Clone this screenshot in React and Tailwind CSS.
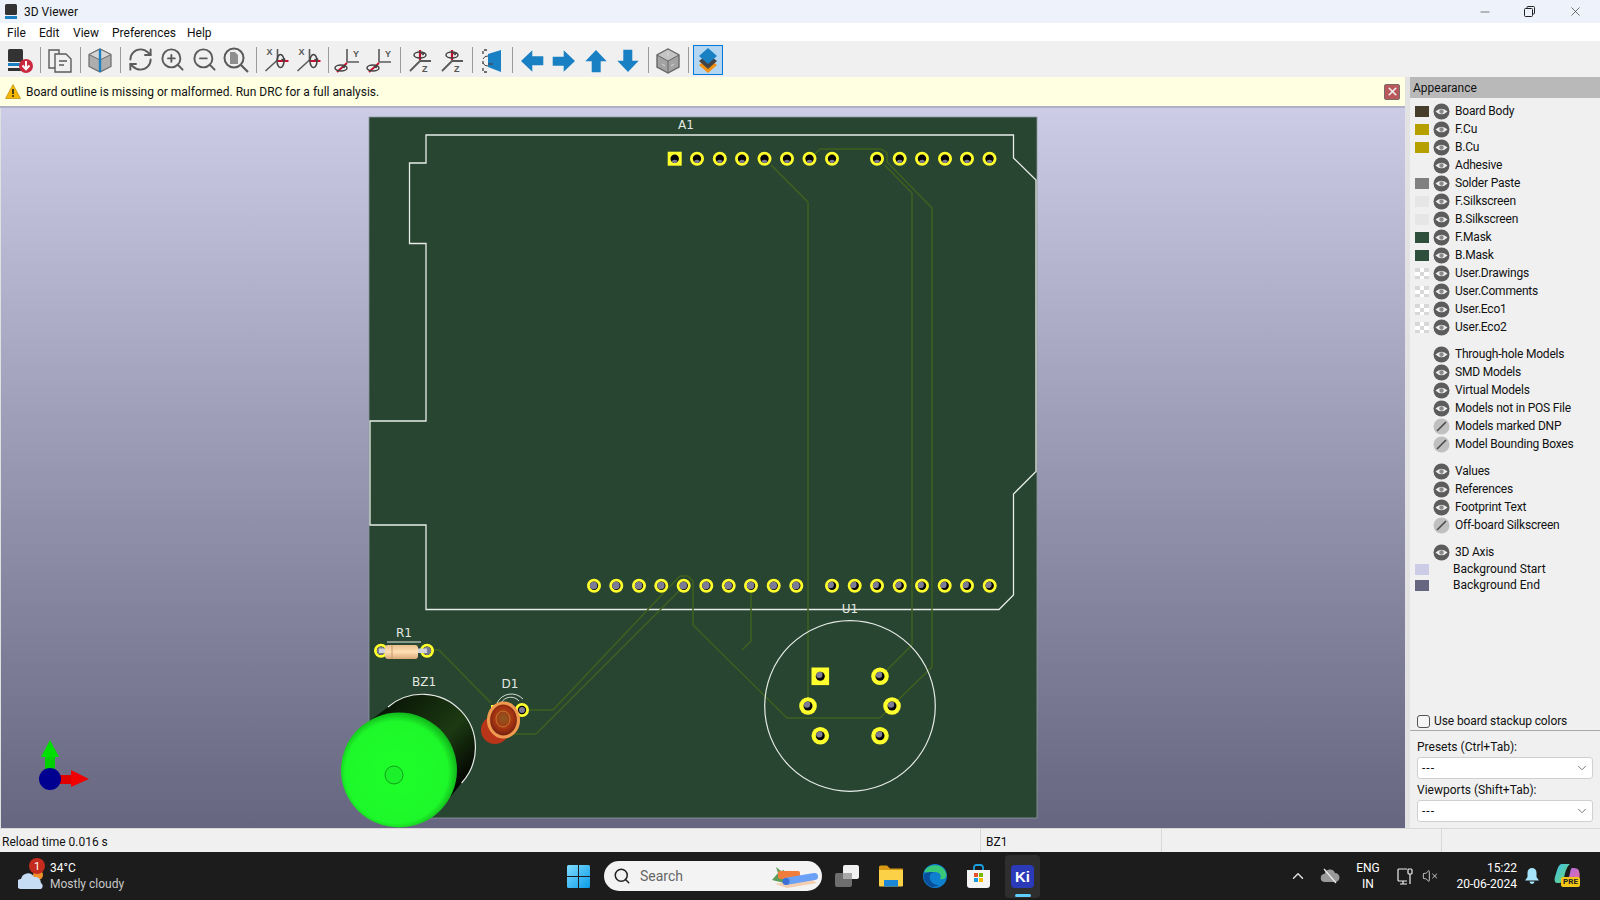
import { ChevronDown, Minus, X, RefreshCw, ZoomIn, ZoomOut, Search, ChevronUp, VolumeX } from "lucide-react";

const GRAY = "#5a5a5a";
const BLUE = "#1a80c4";
const RED = "#c8102e";

function Icon({ children }) {
  return (
    <svg width="32" height="32" viewBox="0 0 32 32" className="block shrink-0">
      {children}
    </svg>
  );
}

function SaveBoardIcon() {
  return (
    <Icon>
      <rect x="4" y="5" width="15" height="13" rx="1.5" fill="#333" />
      <rect x="4" y="19" width="15" height="3" fill={BLUE} />
      <rect x="4" y="24" width="13" height="3" fill="#333" />
      <circle cx="22" cy="22" r="7" fill="#c9283e" />
      <path d="M22 17v8M18.5 21.5l3.5 3.7 3.5-3.7" stroke="#fff" strokeWidth="2" fill="none" />
    </Icon>
  );
}

function CopyIcon() {
  return (
    <Icon>
      <path d="M11 24H5V6h10v4" fill="none" stroke={GRAY} strokeWidth="1.4" />
      <path d="M11 10h11l5 5v13H11z" fill="#f0f0f0" stroke={GRAY} strokeWidth="1.4" />
      <path d="M15 17h8M15 21h5" stroke={GRAY} strokeWidth="1.4" />
    </Icon>
  );
}

function BoxIcon() {
  return (
    <Icon>
      <path d="M16 5l11 5.5v12L16 28 5 22.500v-12z" fill="#aeaeae" stroke="#6a6a6a" strokeWidth="1.2" />
      <path d="M5 10.500L16 16l11-5.500L16 5z" fill="#d6d6d6" stroke="#6a6a6a" strokeWidth="1" />
      <path d="M16 5v23" stroke={BLUE} strokeWidth="2.4" />
    </Icon>
  );
}

function ZoomFitIcon() {
  return (
    <Icon>
      <circle cx="14" cy="14" r="9.500" fill="none" stroke={GRAY} strokeWidth="2" />
      <path d="M21 21l7 7" stroke={GRAY} strokeWidth="2.200" />
      <path d="M10 8h5l3 3v9h-8z" fill="#8f8f8f" />
    </Icon>
  );
}

function Rotate({ cx, cy, flip }) {
  return (
    <g fill="none" stroke="#444" strokeWidth="1.500">
      <ellipse cx={cx} cy={cy} rx={flip ? 6 : 3.500} ry={flip ? 3 : 6.500} />
      <path d={`M${cx + 1} ${cy - 2}l2 1.500 1.500 -2`} />
    </g>
  );
}

function AxisX({ mirror }) {
  return (
    <Icon>
      <g transform="translate(1.500 0)">
        <text x="5" y="11" fontSize="9" fontWeight="700" fill="#555" fontFamily="'Liberation Sans',sans-serif">X</text>
        <path d="M4 27l12-11V5" fill="none" stroke={GRAY} strokeWidth="1.600" />
        <path d="M16 17h11" stroke={RED} strokeWidth="2" />
        <Rotate cx={mirror ? 20 : 19} cy={17} />
      </g>
    </Icon>
  );
}

function AxisY() {
  return (
    <Icon>
      <g transform="translate(2 0)">
        <text x="19" y="13" fontSize="9" fontWeight="700" fill="#555" fontFamily="'Liberation Sans',sans-serif">Y</text>
        <path d="M13 5v13h12" fill="none" stroke={GRAY} strokeWidth="1.600" />
        <path d="M3 28l10-9" stroke={RED} strokeWidth="2" />
        <Rotate cx={7} cy={24} flip />
      </g>
    </Icon>
  );
}

function AxisZ() {
  return (
    <Icon>
      <path d="M16 6v10" stroke={RED} strokeWidth="2.200" />
      <path d="M27 17H16L6 27" fill="none" stroke={GRAY} strokeWidth="1.800" />
      <text x="18" y="28" fontSize="9" fontWeight="700" fill="#555" fontFamily="'Liberation Sans',sans-serif">Z</text>
      <Rotate cx={16} cy={11} flip />
    </Icon>
  );
}

function FlipIcon() {
  return (
    <Icon>
      <path d="M11 6H7v5M7 17v5M7 24v4h4" fill="none" stroke="#444" strokeWidth="1.300" strokeDasharray="3 2" />
      <path d="M7 15a5 5 0 0 1 5-3M7 19a5 5 0 0 0 5 3" fill="none" stroke="#444" strokeWidth="1" />
      <path d="M12 10l13-4v22l-13-5z" fill={BLUE} />
      <path d="M12 20h5" stroke="#444" strokeWidth="1.200" />
    </Icon>
  );
}

function Arrow({ rotate }) {
  return (
    <Icon>
      <path
        d="M5 17L16.300 6.300v6h11v9h-11v6.400z"
        fill={BLUE}
        transform={`rotate(${rotate} 16 17)`}
      />
    </Icon>
  );
}

function CubeIcon() {
  return (
    <Icon>
      <path d="M16 5l11 6v12l-11 6-11-6V11z" fill="#a2a2a2" stroke="#666" strokeWidth="1.400" />
      <path d="M5 11l11 6 11-6-11-6z" fill="#c4c4c4" stroke="#666" strokeWidth="1" />
      <path d="M16 17v12" stroke="#666" strokeWidth="1" />
      <path d="M16 8v4M10 20l3 2M22 20l-3 2" stroke="#d8d8d8" strokeWidth="1" />
    </Icon>
  );
}

function LayersIcon() {
  return (
    <Icon>
      <path d="M16 14l9 7-9 8-9-8z" fill="#f29111" />
      <path d="M16 10l9 7-9 8-9-8z" fill="#444" />
      <path d="M16 4l9 8-9 8-9-8z" fill={BLUE} />
    </Icon>
  );
}

function Sep() {
  return (
    <div className="w-[8px] h-[26px] flex justify-center shrink-0">
      <div className="w-px h-full bg-[#9a9a9a]" />
    </div>
  );
}

function Btn({ children }) {
  return <div className="w-[32px] h-[32px] flex items-center justify-center shrink-0">{children}</div>;
}

function Toolbar() {
  const lucideProps = { size: 27, color: GRAY, strokeWidth: 1.700 };
  return (
    <div className="h-[36px] bg-[#f0f0f0] flex items-center pl-[4px] pt-[1px]">
      <Btn><SaveBoardIcon /></Btn>
      <Sep />
      <Btn><CopyIcon /></Btn>
      <Sep />
      <Btn><BoxIcon /></Btn>
      <Sep />
      <Btn><RefreshCw {...lucideProps} /></Btn>
      <Btn><ZoomIn {...lucideProps} /></Btn>
      <Btn><ZoomOut {...lucideProps} /></Btn>
      <Btn><ZoomFitIcon /></Btn>
      <Sep />
      <Btn><AxisX /></Btn>
      <Btn><AxisX mirror /></Btn>
      <Sep />
      <Btn><AxisY /></Btn>
      <Btn><AxisY /></Btn>
      <Sep />
      <Btn><AxisZ /></Btn>
      <Btn><AxisZ /></Btn>
      <Sep />
      <Btn><FlipIcon /></Btn>
      <Sep />
      <Btn><Arrow rotate={0} /></Btn>
      <Btn><Arrow rotate={180} /></Btn>
      <Btn><Arrow rotate={90} /></Btn>
      <Btn><Arrow rotate={270} /></Btn>
      <Sep />
      <Btn><CubeIcon /></Btn>
      <Sep />
      <div className="w-[30px] h-[30px] ml-[1px] flex items-center justify-center shrink-0 bg-[#b3d7f3] border border-[#0078d4]">
        <LayersIcon />
      </div>
    </div>
  );
}

const topPads = [697, 719.8, 742, 764.5, 787, 809.5, 832, 877, 899.7, 922, 945, 967, 989.5];
const bottomLeftPads = [594, 616.3, 639, 661.3, 683.7, 706.3, 728.7, 751, 773.7, 796.3];
const bottomRightPads = [832, 854.7, 877, 899.7, 922, 944.7, 967, 989.7];

function Hole({ id, x, y, r, dx, dy, gr }) {
  return (
    <g>
      <clipPath id={id}>
        <circle cx={x} cy={y} r={r} />
      </clipPath>
      <circle cx={x} cy={y} r={r} fill="#050505" />
      <circle cx={x + dx} cy={y + dy} r={gr} fill="#7b7b97" clipPath={`url(#${id})`} />
    </g>
  );
}

function Pad({ id, x, y, square, big, dx, dy, gr }) {
  const outer = big ? 8.800 : 7;
  const hole = big ? 4.500 : 4.200;
  return (
    <g>
      {square ? (
        <rect x={x - outer} y={y - outer} width={outer * 2} height={outer * 2} fill="#ffff2e" />
      ) : (
        <circle cx={x} cy={y} r={outer} fill="#ffff2e" />
      )}
      <Hole id={id} x={x} y={y} r={hole} dx={dx} dy={dy} gr={gr} />
    </g>
  );
}

const traces = [
  "M771 165L808 202V698",
  "M815 154L820 149H881L887 153V162L932 208V667L898 700",
  "M884.600 165L912 193V645L885 672",
  "M553 710L673 583L680 576H688L693 581V625L787 718H880L893 705",
  "M536 734L680 590",
  "M751 593V641L742 650",
  "M432 650H439L491 703",
  "M528 710H553",
  "M510 734H536",
];

function Scene() {
  return (
    <svg width="1404" height="720" viewBox="1 108 1404 720" className="block">
      <defs>
        <linearGradient id="bodyGrad" x1="0" y1="0" x2="1" y2="1">
          <stop offset="0" stopColor="#020802" />
          <stop offset="0.550" stopColor="#1c3a12" />
          <stop offset="0.850" stopColor="#000" />
        </linearGradient>
        <radialGradient id="capGrad" cx="0.480" cy="0.520" r="0.520">
          <stop offset="0" stopColor="#1eff2a" />
          <stop offset="0.850" stopColor="#1ef82a" />
          <stop offset="1" stopColor="#12b81c" />
        </radialGradient>
        <radialGradient id="ledGrad" cx="0.500" cy="0.450" r="0.600">
          <stop offset="0" stopColor="#8a5a20" />
          <stop offset="0.500" stopColor="#a83412" />
          <stop offset="1" stopColor="#5a1a0c" />
        </radialGradient>
        <linearGradient id="resGrad" x1="0" y1="0" x2="0" y2="1">
          <stop offset="0" stopColor="#e8c090" />
          <stop offset="0.500" stopColor="#ffe0b4" />
          <stop offset="1" stopColor="#d8a878" />
        </linearGradient>
      </defs>

      {/* board */}
      <rect x="369" y="117" width="668" height="701" fill="#274530" stroke="#8d98a0" strokeWidth="0.800" />
      <path
        d="M426 135H1013.500V158L1036 180V471.500L1013.500 494V595L999 609.500H426V525H370V421H426V243.500H409.500V163H426Z"
        fill="none"
        stroke="#e8ece8"
        strokeWidth="1.300"
      />
      <g fill="none" stroke="#40601f" strokeWidth="1.500">
        {traces.map((d) => (
          <path key={d} d={d} />
        ))}
      </g>

      {/* pads */}
      <Pad id="t0" x={674.700} y={158.700} square dx={0} dy={4} gr={3} />
      {topPads.map((x, i) => (
        <Pad key={x} id={`t${i + 1}`} x={x} y={158.700} dx={0} dy={4} gr={3} />
      ))}
      {bottomLeftPads.map((x, i) => (
        <Pad key={x} id={`bl${i}`} x={x} y={585.700} dx={-0.500} dy={-0.300} gr={3.800} />
      ))}
      {bottomRightPads.map((x, i) => (
        <Pad key={x} id={`br${i}`} x={x} y={585.700} dx={-1.500} dy={-1} gr={3.400} />
      ))}
      <Pad id="u0" x={820.300} y={676.300} square big dx={-1} dy={-1.500} gr={3.200} />
      <Pad id="u1" x={880} y={676.300} big dx={-1} dy={-1.500} gr={3.200} />
      <Pad id="u2" x={808} y={706} big dx={-1} dy={-1.500} gr={3.200} />
      <Pad id="u3" x={892} y={706} big dx={-1} dy={-1.500} gr={3.200} />
      <Pad id="u4" x={820.300} y={735.700} big dx={-1} dy={-1.500} gr={3.200} />
      <Pad id="u5" x={880} y={735.700} big dx={-1} dy={-1.500} gr={3.200} />

      {/* silkscreen */}
      <circle cx="850" cy="706" r="85.300" fill="none" stroke="#e8ece8" strokeWidth="1.200" />
      <g fill="#e4e8e4" fontFamily="'DejaVu Sans',sans-serif" fontSize="12" textAnchor="middle">
        <text x="686" y="129">A1</text>
        <text x="850" y="613">U1</text>
        <text x="404" y="637">R1</text>
        <text x="424" y="686">BZ1</text>
        <text x="510" y="688">D1</text>
      </g>

      {/* R1 */}
      <path d="M387 642H421" stroke="#e8ece8" strokeWidth="1" />
      <Pad id="r0" x={381} y={650.700} dx={0} dy={0} gr={4.200} />
      <Pad id="r1" x={427} y={650.700} dx={0} dy={0} gr={4.200} />
      <rect x="379" y="648.500" width="48" height="4.500" fill="#d0d4d8" />
      <rect x="385" y="645" width="33" height="14" rx="3" fill="url(#resGrad)" />
      <path d="M392 645v14" stroke="#c89868" strokeWidth="1" />

      {/* D1 */}
      <path d="M497 703a16 16 0 0 1 26 -4M501 703a11 11 0 0 1 18 -2" fill="none" stroke="#e8ece8" strokeWidth="0.900" />
      <rect x="491" y="705" width="12" height="10" fill="#ffff2e" />
      <Pad id="d1" x={522} y={710} dx={0} dy={0} gr={3} />
      <circle cx="495" cy="730" r="14" fill="#b8351a" />
      <ellipse cx="503.500" cy="720" rx="15" ry="17" fill="url(#ledGrad)" stroke="#f09a50" strokeWidth="3.200" />
      <ellipse cx="503" cy="719" rx="7" ry="8" fill="none" stroke="#c8762c" strokeWidth="1" />

      {/* BZ1 */}
      <path
        d="M359 729L388 707A53 53 0 0 1 461.600 783L438.700 811.400Z"
        fill="url(#bodyGrad)"
      />
      <path d="M388 707A53 53 0 0 1 461.600 783" fill="none" stroke="#e8ece8" strokeWidth="1.200" />
      <ellipse cx="399" cy="770" rx="58" ry="57.500" fill="url(#capGrad)" />
      <circle cx="394" cy="775" r="9" fill="#1cf02a" stroke="#0c8a14" strokeWidth="0.800" />

      {/* axis */}
      <rect x="45" y="755" width="10" height="16" fill="#00d000" />
      <path d="M50 740L59 757H41Z" fill="#00e000" />
      <rect x="58" y="775" width="15" height="9" fill="#e00000" />
      <path d="M71 770L89 779L71 787Z" fill="#f00000" />
      <circle cx="50" cy="779" r="11" fill="#000090" />
    </svg>
  );
}

function Eye() {
  return (
    <svg width="17" height="17" viewBox="0 0 17 17" className="block shrink-0">
      <circle cx="8.500" cy="8.500" r="8" fill="#5c5c5c" />
      <path d="M2.500 8.500Q8.500 2.800 14.500 8.500Q8.500 14.200 2.500 8.500Z" fill="#f0f0f0" />
      <circle cx="8.500" cy="8.500" r="2.200" fill="#8a8a8a" />
    </svg>
  );
}

function EyeOff() {
  return (
    <svg width="17" height="17" viewBox="0 0 17 17" className="block shrink-0">
      <circle cx="8.500" cy="8.500" r="8" fill="#c0c0c0" />
      <path d="M4 13L13 4" stroke="#4a4a4a" strokeWidth="1.600" />
    </svg>
  );
}

function Checker() {
  return (
    <svg width="14" height="11" viewBox="0 0 14 11" className="block">
      <rect width="14" height="11" fill="#fff" />
      <path d="M0 0h5v4H0zM9 0h5v4H9zM5 4h4v4H5zM0 8h5v3H0zM9 8h5v3H9z" fill="#d8d8d8" />
    </svg>
  );
}

const layerRows = [
  ["Board Body", "bg-[#463e2b]"],
  ["F.Cu", "bg-[#b5a000]"],
  ["B.Cu", "bg-[#b5a000]"],
  ["Adhesive", ""],
  ["Solder Paste", "bg-[#808080]"],
  ["F.Silkscreen", "bg-[#e6e6e6]"],
  ["B.Silkscreen", "bg-[#e6e6e6]"],
  ["F.Mask", "bg-[#2d4f3c]"],
  ["B.Mask", "bg-[#2d4f3c]"],
  ["User.Drawings", "checker"],
  ["User.Comments", "checker"],
  ["User.Eco1", "checker"],
  ["User.Eco2", "checker"],
];

const modelRows = [
  ["Through-hole Models", true],
  ["SMD Models", true],
  ["Virtual Models", true],
  ["Models not in POS File", true],
  ["Models marked DNP", false],
  ["Model Bounding Boxes", false],
];

const textRows = [
  ["Values", true],
  ["References", true],
  ["Footprint Text", true],
  ["Off-board Silkscreen", false],
];

function Row({ label, swatch, on = true }) {
  return (
    <div className="h-[18px] flex items-center">
      <div className="w-[14px] h-[11px] ml-[5px] shrink-0">
        {swatch === "checker" ? <Checker /> : <div className={`w-full h-full ${swatch || ""}`} />}
      </div>
      <div className="ml-[4px]">{on ? <Eye /> : <EyeOff />}</div>
      <span className="ml-[5px] text-[#111] tracking-[-0.2px]">{label}</span>
    </div>
  );
}

function Dropdown() {
  return (
    <div className="mx-[7px] h-[22px] bg-white border border-[#d0d0d0] rounded-[3px] flex items-center justify-between pl-[4px] pr-[3px]">
      <span className="tracking-[1px]">---</span>
      <ChevronDown size={14} color="#666" strokeWidth={1.500} />
    </div>
  );
}

function Sidebar() {
  return (
    <div className="flex-1 bg-[#f0f0f0] flex flex-col text-[12px] leading-none">
      <div className="h-[21px] bg-[#b9b9b9] flex items-center pl-[3px] text-[#111]">Appearance</div>
      <div className="mt-[4px]">
        {layerRows.map(([label, swatch]) => (
          <Row key={label} label={label} swatch={swatch} />
        ))}
      </div>
      <div className="mt-[9px]">
        {modelRows.map(([label, on]) => (
          <Row key={label} label={label} on={on} />
        ))}
      </div>
      <div className="mt-[9px]">
        {textRows.map(([label, on]) => (
          <Row key={label} label={label} on={on} />
        ))}
      </div>
      <div className="mt-[9px]">
        <Row label="3D Axis" />
      </div>
      <div className="h-[16px] flex items-center">
        <div className="w-[14px] h-[11px] ml-[5px] bg-[#ccccE6]" />
        <span className="ml-[24px] text-[#111]">Background Start</span>
      </div>
      <div className="h-[16px] flex items-center">
        <div className="w-[14px] h-[11px] ml-[5px] bg-[#666680]" />
        <span className="ml-[24px] text-[#111]">Background End</span>
      </div>

      <div className="flex-1" />

      <div className="h-[16px] flex items-center pl-[7px]">
        <div className="w-[13px] h-[13px] bg-[#f5f5f5] border border-[#555] rounded-[3px]" />
        <span className="ml-[4px] text-[#111] tracking-[-0.1px]">Use board stackup colors</span>
      </div>
      <div className="h-px bg-[#a8a8a8] mt-[1px]" />
      <div className="h-[26px] flex items-center pl-[7px] pt-[6px] text-[#111]">Presets (Ctrl+Tab):</div>
      <Dropdown />
      <div className="h-[21px] flex items-center pl-[7px] text-[#111]">Viewports (Shift+Tab):</div>
      <Dropdown />
      <div className="h-[6px]" />
    </div>
  );
}

function WeatherIcon() {
  return (
    <div className="relative w-[28px] h-[30px]">
      <svg width="28" height="30" viewBox="0 0 28 30" className="block">
        <circle cx="20" cy="14" r="5" fill="#f0902a" />
        <path d="M3 28a5 5 0 0 1 0-10 7 7 0 0 1 13-2 6 6 0 0 1 7 6 3.500 3.500 0 0 1 0 6z" fill="#c6dcf4" />
      </svg>
      <div className="absolute left-[11px] top-[-3px] w-[16px] h-[16px] rounded-full bg-[#c42b1c] text-white text-[11px] flex items-center justify-center">
        1
      </div>
    </div>
  );
}

function WindowsLogo() {
  return (
    <svg width="23" height="23" viewBox="0 0 23 23" className="block shrink-0">
      <defs>
        <linearGradient id="winGrad" x1="0" y1="0" x2="1" y2="1">
          <stop offset="0" stopColor="#7fdcff" />
          <stop offset="1" stopColor="#0a9be8" />
        </linearGradient>
      </defs>
      <path d="M0 1.500A1.500 1.500 0 0 1 1.500 0H11v11H0zM12 0h9.500A1.500 1.500 0 0 1 23 1.500V11H12zM0 12h11v11H1.500A1.500 1.500 0 0 1 0 21.500zM12 12h11v9.500a1.500 1.500 0 0 1-1.500 1.500H12z" fill="url(#winGrad)" />
    </svg>
  );
}

function SearchArt() {
  return (
    <svg width="48" height="24" viewBox="0 0 48 24" className="block">
      <path d="M2 16L8 9l-2-6 5 4 3-1v13z" fill="#5b9e5a" />
      <rect x="8" y="7" width="22" height="8" rx="2" fill="#f07d3c" />
      <path d="M5 20l34-6 8 5-30 5z" fill="#f5cdb0" />
      <path d="M14 14l30-5a3.500 3.500 0 0 1 1 7l-29 5a4.500 4.500 0 0 1-2-7z" fill="#6aa0f5" />
      <circle cx="16" cy="17.500" r="3.500" fill="#3d6fd6" />
    </svg>
  );
}

function TaskViewIcon() {
  return (
    <svg width="24" height="22" viewBox="0 0 24 22" className="block shrink-0">
      <rect x="0" y="8" width="17" height="14" rx="2" fill="#6e6e6e" />
      <rect x="8" y="0" width="16" height="14" rx="2" fill="#f0f0f0" />
      <rect x="8" y="8" width="9" height="6" fill="#a8a8a8" />
    </svg>
  );
}

function FolderIcon() {
  return (
    <svg width="24" height="22" viewBox="0 0 24 22" className="block shrink-0">
      <path d="M0 2a1.500 1.500 0 0 1 1.500-1.500H8l3 3h12a1 1 0 0 1 1 1V8H0z" fill="#d89a14" />
      <path d="M0 5h24v15.500a1 1 0 0 1-1 1H1a1 1 0 0 1-1-1z" fill="#fbd247" />
      <path d="M5 15h14v6.500H5z" fill="#1b87d6" />
    </svg>
  );
}

function EdgeIcon() {
  return (
    <svg width="24" height="24" viewBox="0 0 24 24" className="block shrink-0">
      <circle cx="12" cy="12" r="12" fill="#0f7fd0" />
      <path d="M1 8a12 12 0 0 1 22 1c1.500 5-3 7-6 6 2-3 0-7-5-7-4 0-8 1-11 0z" fill="#38c878" />
      <path d="M12 8c-4 0-6 3-5 7 1 4 5 6 9 6-3 2-8 3-11 0C2 18 0 14 1 10c3-2 7-2 11-2z" fill="#0a4f9c" />
    </svg>
  );
}

function StoreIcon() {
  return (
    <svg width="23" height="24" viewBox="0 0 23 24" className="block shrink-0">
      <path d="M7 6V3.500A2.500 2.500 0 0 1 9.500 1h4A2.500 2.500 0 0 1 16 3.500V6" fill="none" stroke="#1aa0e0" strokeWidth="1.800" />
      <path d="M0 6h23v15a3 3 0 0 1-3 3H3a3 3 0 0 1-3-3z" fill="#f4f4f4" />
      <rect x="7" y="9" width="4" height="4" fill="#e8502a" />
      <rect x="12" y="9" width="4" height="4" fill="#7ab800" />
      <rect x="7" y="14" width="4" height="4" fill="#1a9be0" />
      <rect x="12" y="14" width="4" height="4" fill="#f5b800" />
    </svg>
  );
}

function CopilotIcon() {
  return (
    <div className="relative w-[28px] h-[28px] ml-[14px] shrink-0">
      <svg width="28" height="24" viewBox="0 0 28 24" className="block">
        <defs>
          <linearGradient id="copA" x1="0" y1="0" x2="1" y2="1">
            <stop offset="0" stopColor="#3fc4ef" />
            <stop offset="1" stopColor="#6fd36b" />
          </linearGradient>
          <linearGradient id="copB" x1="0" y1="0" x2="1" y2="1">
            <stop offset="0" stopColor="#a868e8" />
            <stop offset="1" stopColor="#f0709c" />
          </linearGradient>
        </defs>
        <path d="M8 2h8c-3 2-5 8-6 14-1 4-3 5-5 5H3C1 21 0 18 1 15 3 9 4 2 8 2z" fill="url(#copA)" />
        <path d="M18 6c3 0 6 0 7 3 1 3 1 7-1 10-1 2-3 2-5 2h-8c3-2 4-6 5-10 .5-3 1-5 2-5z" fill="url(#copB)" />
      </svg>
      <div className="absolute left-[7px] top-[15px] w-[19px] h-[10px] rounded-[2px] bg-[#f5c518] text-[#222] text-[8px] font-bold flex items-center justify-center leading-none">
        PRE
      </div>
    </div>
  );
}

function Taskbar() {
  return (
    <div className="h-[48px] bg-[#1c1c1c] flex items-center text-white">
      <div className="w-[567px] flex items-center pl-[18px] shrink-0">
        <WeatherIcon />
        <div className="ml-[4px] text-[12px] leading-[16px]">
          <div>34°C</div>
          <div className="text-[#c8c8c8]">Mostly cloudy</div>
        </div>
      </div>
      <WindowsLogo />
      <div className="ml-[14px] w-[218px] h-[30px] bg-[#f3f3f3] rounded-full flex items-center pl-[9px] pr-[4px] shrink-0">
        <Search size={18} color="#222" strokeWidth={2} />
        <span className="ml-[9px] text-[14px] text-[#666]">Search</span>
        <div className="ml-auto">
          <SearchArt />
        </div>
      </div>
      <div className="ml-[13px]"><TaskViewIcon /></div>
      <div className="ml-[20px]"><FolderIcon /></div>
      <div className="ml-[20px]"><EdgeIcon /></div>
      <div className="ml-[20px]"><StoreIcon /></div>
      <div className="relative ml-[15px] w-[35px] h-[43px] bg-[#2e2e2e] rounded-[4px] flex items-center justify-center shrink-0">
        <div className="w-[23px] h-[23px] bg-[#2b3ab8] rounded-[4px] text-white font-bold text-[15px] flex items-center justify-center leading-none font-['Liberation_Sans',sans-serif]">
          Ki
        </div>
        <div className="absolute bottom-[1px] left-[10px] w-[16px] h-[3px] rounded-full bg-[#60cdff]" />
      </div>

      <div className="ml-auto pr-[18px] flex items-center">
        <div className="w-[24px] flex justify-center"><ChevronUp size={18} color="#ddd" /></div>
        <div className="w-[24px] ml-[8px] flex justify-center">
          <svg width="20" height="16" viewBox="0 0 20 16" className="block">
            <path d="M5 14a4 4 0 0 1-.500-8 5.500 5.500 0 0 1 10.500-1 4.500 4.500 0 0 1 0 9z" fill="#9a9a9a" />
            <path d="M4 1l12 14" stroke="#eee" strokeWidth="1.200" />
          </svg>
        </div>
        <div className="w-[36px] ml-[8px] text-[12px] leading-[16px] text-center">
          <div>ENG</div>
          <div>IN</div>
        </div>
        <div className="w-[24px] ml-[7px] flex justify-center">
          <svg width="16" height="17" viewBox="0 0 16 17" fill="none" stroke="#eee" strokeWidth="1.200" className="block">
            <path d="M10 13H2a1 1 0 0 1-1-1V2a1 1 0 0 1 1-1h8" />
            <path d="M6 13v3M3 16h7" />
            <rect x="11" y="1" width="4" height="5" rx="1" />
            <path d="M13 6v10" />
          </svg>
        </div>
        <div className="w-[20px] ml-[3px] flex justify-center">
          <VolumeX size={16} color="#ddd" strokeWidth={1.300} />
        </div>
        <div className="w-[77px] text-[12px] leading-[16px] text-right">
          <div>15:22</div>
          <div>20-06-2024</div>
        </div>
        <div className="w-[16px] ml-[7px] flex justify-center">
          <svg width="14" height="16" viewBox="0 0 14 16" className="block">
            <path d="M7 0a4.500 4.500 0 0 1 4.500 4.500V9L14 12.500H0L2.500 9V4.500A4.500 4.500 0 0 1 7 0z" fill="#a6e4fb" />
            <path d="M4.500 13.500a2.500 2.500 0 0 0 5 0z" fill="#a6e4fb" />
          </svg>
        </div>
        <CopilotIcon />
      </div>
    </div>
  );
}

function App() {
  const menus = [
    ["File", "w-[32px]"],
    ["Edit", "w-[34px]"],
    ["View", "w-[39px]"],
    ["Preferences", "w-[75px]"],
    ["Help", "w-[40px]"],
  ];

  return (
    <div className="w-[1600px] h-[900px] flex flex-col overflow-hidden text-[12px] leading-none text-[#111] font-['Roboto',sans-serif]">
      {/* Title bar */}
      <div className="h-[23px] bg-[#eef2fa] flex items-center">
        <svg width="14" height="16" viewBox="0 0 14 16" className="block ml-[4px]">
          <rect x="1" y="0" width="12" height="11" rx="1.500" fill="#333" />
          <rect x="1" y="12" width="12" height="3" fill={BLUE} />
        </svg>
        <span className="ml-[6px] text-[12px]">3D Viewer</span>
        <div className="ml-auto flex items-center pr-[2px]">
          <div className="w-[45px] flex justify-center"><Minus size={14} color="#222" strokeWidth={1} /></div>
          <div className="w-[45px] flex justify-center">
            <svg width="11" height="11" viewBox="0 0 11 11" fill="none" stroke="#222" className="block">
              <rect x="0.500" y="2.500" width="8" height="8" rx="1" />
              <path d="M3 2.500V1.500a1 1 0 0 1 1-1h5.500a1 1 0 0 1 1 1V7a1 1 0 0 1-1 1h-1" />
            </svg>
          </div>
          <div className="w-[46px] flex justify-center"><X size={15} color="#222" strokeWidth={1} /></div>
        </div>
      </div>

      {/* Menu bar */}
      <div className="h-[18px] bg-white flex items-center pl-[7px] pt-[1px]">
        {menus.map(([label, width]) => (
          <span key={label} className={width}>{label}</span>
        ))}
      </div>

      <Toolbar />

      {/* Main area */}
      <div className="flex-1 flex min-h-0">
        <div className="w-[1405px] flex flex-col shrink-0">
          <div className="h-[31px] bg-[#ffffe1] border-b-2 border-[#b0b0c4] flex items-center pl-[5px]">
            <svg width="16" height="15" viewBox="0 0 16 15" className="block">
              <path d="M8 0.500L15.500 14.500H0.500Z" fill="#f5b800" stroke="#b08000" strokeWidth="0.600" />
              <path d="M8 5v5" stroke="#222" strokeWidth="1.600" />
              <circle cx="8" cy="12" r="1" fill="#222" />
            </svg>
            <span className="ml-[5px]">Board outline is missing or malformed. Run DRC for a full analysis.</span>
            <div className="ml-auto mr-[5px] w-[16px] h-[16px] bg-[#b8585a] border border-[#7a6a6a] rounded-[2px] flex items-center justify-center">
              <X size={13} color="#f0f0f0" strokeWidth={3} />
            </div>
          </div>
          <div className="flex-1 min-h-0 bg-gradient-to-b from-[#ccccE6] to-[#666680] overflow-hidden border-l border-[#e0e0e0]">
            <Scene />
          </div>
        </div>
        <div className="w-[5px] bg-[#e3e3e3] shrink-0" />
        <Sidebar />
      </div>

      {/* Status bar */}
      <div className="h-[24px] bg-[#f0f0f0] border-t border-[#d8d8d8] flex items-center">
        <div className="w-[980px] pl-[2px] pt-[2px]">Reload time 0.016 s</div>
        <div className="w-[181px] h-full border-l border-[#d8d8d8] flex items-center pl-[5px] pt-[2px]">BZ1</div>
        <div className="w-[280px] h-full border-l border-[#d8d8d8]" />
        <div className="flex-1 h-full border-l border-[#d8d8d8]" />
      </div>

      <Taskbar />
    </div>
  );
}

export default App;
